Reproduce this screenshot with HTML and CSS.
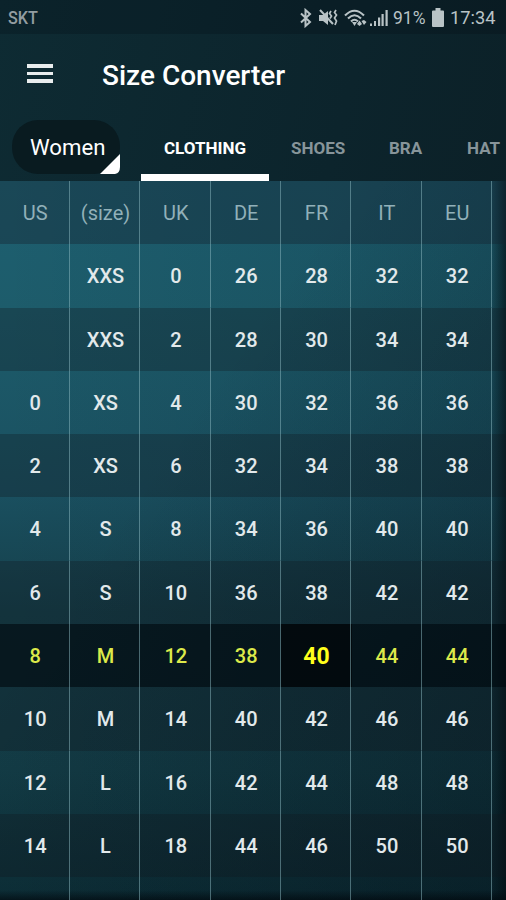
FILE: index.html
```html
<!DOCTYPE html>
<html lang="en">
<head>
    <meta charset="UTF-8">
    <meta name="viewport" content="width=device-width, initial-scale=1.0">
    <title>Size Converter</title>
    <link rel="stylesheet" href="styles.css">
</head>
<body>
    <div class="status-bar">
        <span class="carrier">SKT</span>
        <div class="status-icons">
            <svg class="bluetooth" width="14" height="20" viewBox="0 0 14 20"><path d="M2 5.5l9 8.5-4.5 4V2L11 6l-9 8.500" fill="none" stroke="currentColor" stroke-width="2"/></svg>
            <svg class="mute" width="20" height="20" viewBox="0 0 20 20"><path d="M1 7h4l5-4v14l-5-4H1z" fill="currentColor"/><path d="M2 2l13 14" stroke="currentColor" stroke-width="2"/><path d="M13 3l-1.500 2.500 2 2.500-1.500 2.500M18 2l-1.500 2.500 2 2.500-2 3 2 3-1.500 4" fill="none" stroke="currentColor" stroke-width="1.700"/></svg>
            <svg class="wifi" width="24" height="20" viewBox="0 0 24 20"><path d="M1 7.500Q10.500-2 20 7.500M4 10.500Q10.500 4 17 10.500M7 13.500q3.500-3.500 7 0" fill="none" stroke="currentColor" stroke-width="2.100"/><path d="M8 14h5l-2.500 4zM13 16l2.500-3.500L18 16l-2.500 2zM17.500 13l2.500-1 2.500 2-2.500 3z" fill="currentColor"/></svg>
            <svg class="signal" width="18" height="20" viewBox="0 0 18 20"><path d="M0 15.500h2V18H0zM4 13h2v5H4zM8 9.500h2.200V18H8zM11.500 6h2.200v12h-2.200zM15.500 2h2.200v16h-2.200z" fill="currentColor"/></svg>
            <span class="percent">91%</span>
            <svg class="battery" width="12" height="19" viewBox="0 0 12 19"><path d="M3.500 0h5v2.500H11a1 1 0 0 1 1 1V18a1 1 0 0 1-1 1H1a1 1 0 0 1-1-1V3.500a1 1 0 0 1 1-1h2.500z" fill="currentColor"/></svg>
            <span class="clock">17:34</span>
        </div>
    </div>

    <header>
        <div class="menu"><i></i><i></i><i></i></div>
        <h1>Size Converter</h1>
    </header>

    <nav>
        <div class="spinner">
            <span>Women</span>
            <svg class="corner" width="20" height="20" viewBox="0 0 20 20"><path d="M20 0v13q0 6-5 7H0z" fill="#fff"/></svg>
        </div>
        <div class="tabs">
            <div class="tab active">CLOTHING</div>
            <div class="tab shoes">SHOES</div>
            <div class="tab bra">BRA</div>
            <div class="tab">HAT</div>
        </div>
    </nav>

    <main class="sizes" id="sizes"></main>

    <script>
        const columns = ["US", "(size)", "UK", "DE", "FR", "IT", "EU"];
        const sizes = [
            ["", "XXS", 0, 26, 28, 32, 32],
            ["", "XXS", 2, 28, 30, 34, 34],
            [0, "XS", 4, 30, 32, 36, 36],
            [2, "XS", 6, 32, 34, 38, 38],
            [4, "S", 8, 34, 36, 40, 40],
            [6, "S", 10, 36, 38, 42, 42],
            [8, "M", 12, 38, 40, 44, 44],
            [10, "M", 14, 40, 42, 46, 46],
            [12, "L", 16, 42, 44, 48, 48],
            [14, "L", 18, 44, 46, 50, 50],
            ["", "", "", "", "", "", ""]
        ];
        const selectedRow = 6;
        const selectedColumn = 4;

        function addRow(values, className, isSelected) {
            const row = document.createElement("div");
            row.className = "row " + className;
            values.forEach((value, i) => {
                const cell = document.createElement("div");
                cell.className = isSelected && i === selectedColumn ? "cell picked" : "cell";
                cell.textContent = value;
                row.appendChild(cell);
            });
            document.getElementById("sizes").appendChild(row);
        }

        addRow(columns, "head", false);
        sizes.forEach((values, i) => {
            const isSelected = i === selectedRow;
            addRow(values, isSelected ? "selected" : i % 2 ? "dark" : "", isSelected);
        });
    </script>
</body>
</html>
```
FILE: styles.css
```css
* {
    box-sizing: border-box;
}

body {
    margin: 0;
    width: 506px;
    height: 900px;
    overflow: hidden;
    display: flex;
    flex-direction: column;
    font-family: Roboto, sans-serif;
    color: #fff;
    background: linear-gradient(105deg, #0e2b33 0, #0c242c 50%, #0b1d23 100%);
}

/* Status bar */
.status-bar {
    height: 34px;
    flex: none;
    display: flex;
    justify-content: space-between;
    padding: 1px 10px 0 8px;
    color: #b9c3c6;
    background: rgba(5, 12, 18, 0.25);
    font-size: 18px;
    line-height: 34px;
}

.carrier {
    color: #929da1;
    font-weight: 500;
    transform: scaleX(0.9);
    transform-origin: left;
}

.status-icons {
    display: flex;
    align-items: center;
}

.status-icons svg {
    flex: none;
}

.mute {
    margin-left: 5px;
}

.wifi {
    margin-left: 6px;
}

.signal {
    margin-left: 2px;
}

.percent {
    width: 33px;
    margin-left: 5px;
    font-size: 19px;
    transform: scaleX(0.92);
    transform-origin: left;
}

.battery {
    margin-left: 6px;
}

.clock {
    width: 46px;
    margin-left: 6px;
    font-size: 19px;
    transform: scaleX(0.96);
    transform-origin: left;
}

/* Title */
header {
    height: 81px;
    flex: none;
    display: flex;
    align-items: center;
    padding-left: 27px;
}

.menu {
    width: 26px;
    display: flex;
    flex-direction: column;
    gap: 4px;
    margin: 0 49px 2px 0;
}

.menu i {
    height: 3.6px;
    background: #e9edee;
}

h1 {
    margin: 1px 0 0;
    font-size: 28px;
    font-weight: 500;
}

/* Tabs */
nav {
    height: 66px;
    flex: none;
    display: flex;
}

.spinner {
    position: relative;
    width: 108px;
    height: 54px;
    margin: 5px 21px 0 12px;
    padding-left: 18px;
    border-radius: 26px;
    background: #091b20;
    font-size: 22.2px;
    line-height: 54px;
}

.corner {
    position: absolute;
    right: 0;
    bottom: 0;
}

.tabs {
    display: flex;
    font-size: 17px;
    font-weight: 700;
    line-height: 66px;
    color: #87959a;
}

.tab {
    flex: none;
    height: 66px;
}

.active {
    width: 128px;
    text-align: center;
    color: #fff;
    border-bottom: 7px solid #fff;
}

.shoes {
    width: 98px;
    padding-left: 22px;
}

.bra {
    width: 100px;
    padding-left: 22px;
}

/* Size table */
.sizes {
    flex: 1;
    overflow: hidden;
    background:
        linear-gradient(to right, transparent 492px, rgba(0, 10, 14, 0.6) 506px),
        linear-gradient(to top, rgba(0, 5, 10, 0.6), transparent 10px),
        linear-gradient(to bottom right, transparent 35%, rgba(3, 12, 18, 0.36)),
        linear-gradient(to right, transparent, rgba(3, 16, 28, 0.16)),
        linear-gradient(#1d5f70, #1d5c6b 18%, #1a5060 43%, #153f4a 60%, #133c46 82%, #0d3039);
}

.row {
    display: flex;
    height: 63.3px;
}

.cell {
    flex: none;
    width: 70.35px;
    background: linear-gradient(rgba(140, 185, 193, 0.5), rgba(140, 185, 193, 0.5)) right / 1.4px 100% no-repeat;
    font-size: 20px;
    font-weight: 500;
    line-height: 65.6px;
    text-align: center;
    color: #e2e9eb;
}

.head {
    background: rgba(20, 35, 48, 0.38);
}

.head .cell {
    font-weight: 400;
    color: #91b0b9;
}

.dark {
    background: rgba(16, 24, 30, 0.3);
}

.selected {
    background: rgba(2, 8, 14, 0.7);
}

.selected .cell {
    color: #dce94a;
}

.selected .picked {
    background-color: rgba(2, 4, 7, 0.65);
    color: #ffff1c;
    font-size: 23px;
    font-weight: 700;
}
```
